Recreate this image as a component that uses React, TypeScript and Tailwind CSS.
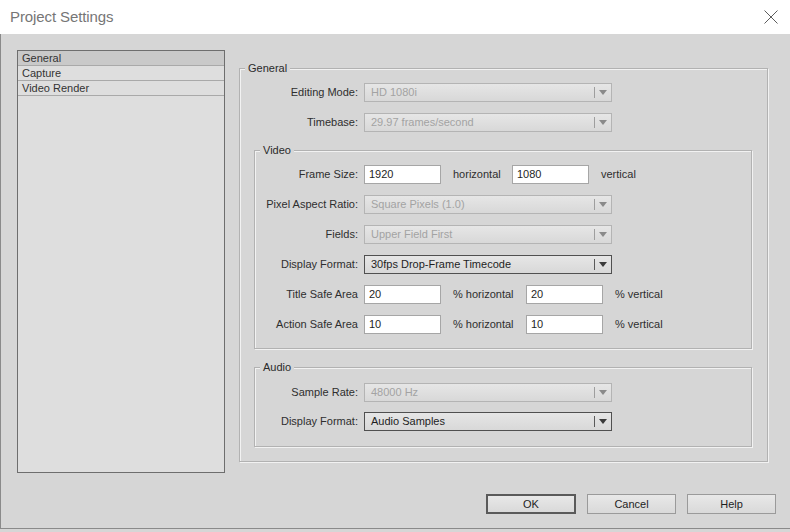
import clsx from 'clsx'
import type { ReactNode } from 'react'

function Arrow({ enabled }: { enabled: boolean }) {
  return (
    <svg width="8" height="5" viewBox="0 0 8 5">
      <path d="M0 0 L8 0 L4 5 Z" fill={enabled ? '#3a3a3a' : '#8a8a8a'} />
    </svg>
  )
}

function Select({ value, enabled = false }: { value: string; enabled?: boolean }) {
  return (
    <div
      className={clsx(
        'flex h-[19px] w-[248px] items-center border bg-gradient-to-b from-[#e6e6e6] to-[#d8d8d8]',
        enabled ? 'border-[#505050] text-[#1e1e1e]' : 'border-[#b4b4b4] text-[#a3a3a3]',
      )}
    >
      <span className="flex-1 truncate pl-[6px]">{value}</span>
      <span className={clsx('h-[11px] w-px', enabled ? 'bg-[#5a5a5a]' : 'bg-[#9e9e9e]')} />
      <span className="flex w-[16px] justify-center">
        <Arrow enabled={enabled} />
      </span>
    </div>
  )
}

function Field({ value }: { value: string }) {
  return (
    <div className="flex h-[19px] w-[77px] shrink-0 items-center border border-[#a6a6a6] bg-white pl-[4px] text-[#1e1e1e]">
      {value}
    </div>
  )
}

function Row({ label, wide, children }: { label: string; wide?: boolean; children: ReactNode }) {
  return (
    <div className="flex h-[19px] items-center">
      <span className={clsx('shrink-0 pr-[6px] text-right', wide ? 'w-[124px]' : 'w-[109px]')}>{label}</span>
      {children}
    </div>
  )
}

function Group({ legend, className, children }: { legend: string; className?: string; children: ReactNode }) {
  return (
    <div
      className={clsx(
        'relative border border-[#b2b2b2] shadow-[1px_1px_0_#f2f2f2,inset_1px_1px_0_#f2f2f2]',
        className,
      )}
    >
      <span className="absolute -top-[8px] left-[5px] bg-[#d6d6d6] px-[3px] leading-[14px] text-[#2a2a2a]">
        {legend}
      </span>
      {children}
    </div>
  )
}

function Button({ label, isDefault }: { label: string; isDefault?: boolean }) {
  return (
    <div
      className={clsx(
        'flex h-[20px] items-center justify-center bg-gradient-to-b from-[#e8e8e8] to-[#d9d9d9] text-[#1e1e1e]',
        isDefault ? 'w-[90px] border-2 border-[#5a5a5a]' : 'w-[89px] border border-[#9a9a9a]',
      )}
    >
      {label}
    </div>
  )
}

const PAGES = ['General', 'Capture', 'Video Render']

export default function App() {
  return (
    <div className="flex h-[532px] w-[790px] flex-col bg-[#d6d6d6] font-['Liberation_Sans',Arial,sans-serif] text-[11px] text-[#2e2e2e]">
      <div className="flex h-[34px] shrink-0 items-center justify-between bg-white pl-[10px] pr-[12px]">
        <span className="text-[15px] tracking-[-0.1px] text-[#767676]">Project Settings</span>
        <svg width="14" height="14" viewBox="0 0 14 14">
          <path d="M0.5 0.5 L13.5 13.5 M13.5 0.5 L0.5 13.5" stroke="#5c5c5c" strokeWidth="1" />
        </svg>
      </div>

      <div className="flex h-[495px] flex-col border-b border-l border-[#8a8a8a]">
        <div className="flex pl-[16px] pt-[16px]">
          <div className="h-[423px] w-[208px] border border-[#6e6e6e] bg-[#dedede]">
            {PAGES.map((p, i) => (
              <div
                key={p}
                className={clsx(
                  'h-[15px] border-b border-[#a9a9a9] pl-[4px] leading-[14px] text-[#333]',
                  i === 0 && 'bg-[#c9c9c9]',
                )}
              >
                {p}
              </div>
            ))}
          </div>

          <Group legend="General" className="ml-[14px] mt-[18px] h-[394px] w-[529px] pt-[14px]">
            <div className="flex flex-col gap-[11px]">
              <Row label="Editing Mode:" wide>
                <Select value="HD 1080i" />
              </Row>
              <Row label="Timebase:" wide>
                <Select value="29.97 frames/second" />
              </Row>
            </div>

            <Group legend="Video" className="ml-[14px] mt-[18px] w-[498px] pb-[14px] pt-[14px]">
              <div className="flex flex-col gap-[11px]">
                <Row label="Frame Size:">
                  <Field value="1920" />
                  <span className="w-[71px] shrink-0 pl-[12px]">horizontal</span>
                  <Field value="1080" />
                  <span className="pl-[12px]">vertical</span>
                </Row>
                <Row label="Pixel Aspect Ratio:">
                  <Select value="Square Pixels (1.0)" />
                </Row>
                <Row label="Fields:">
                  <Select value="Upper Field First" />
                </Row>
                <Row label="Display Format:">
                  <Select value="30fps Drop-Frame Timecode" enabled />
                </Row>
                <Row label="Title Safe Area">
                  <Field value="20" />
                  <span className="w-[85px] shrink-0 pl-[12px]">% horizontal</span>
                  <Field value="20" />
                  <span className="pl-[12px]">% vertical</span>
                </Row>
                <Row label="Action Safe Area">
                  <Field value="10" />
                  <span className="w-[85px] shrink-0 pl-[12px]">% horizontal</span>
                  <Field value="10" />
                  <span className="pl-[12px]">% vertical</span>
                </Row>
              </div>
            </Group>

            <Group legend="Audio" className="ml-[14px] mt-[18px] w-[498px] pb-[15px] pt-[15px]">
              <div className="flex flex-col gap-[10px]">
                <Row label="Sample Rate:">
                  <Select value="48000 Hz" />
                </Row>
                <Row label="Display Format:">
                  <Select value="Audio Samples" enabled />
                </Row>
              </div>
            </Group>
          </Group>
        </div>

        <div className="mt-[21px] flex justify-end gap-[11px] pr-[14px]">
          <Button label="OK" isDefault />
          <Button label="Cancel" />
          <Button label="Help" />
        </div>
      </div>
    </div>
  )
}
